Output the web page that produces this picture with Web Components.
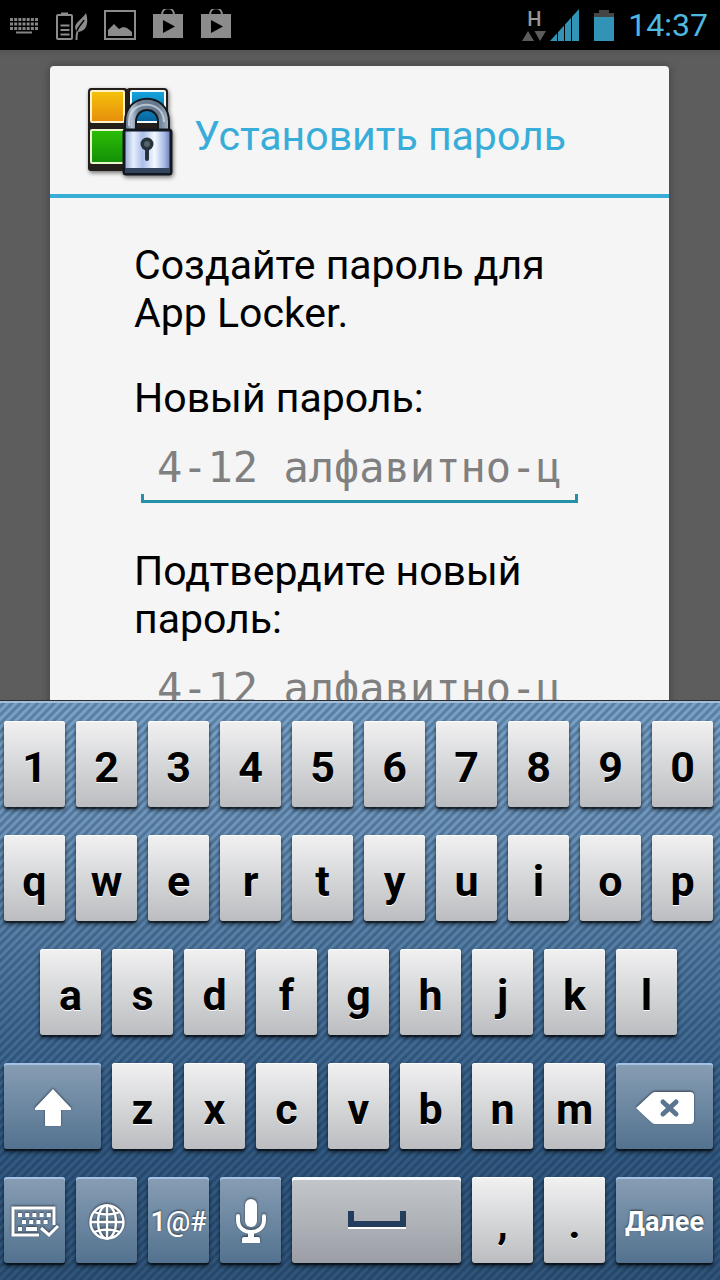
<!DOCTYPE html>
<html lang="ru">
<head>
<meta charset="utf-8">
<meta name="viewport" content="width=device-width, initial-scale=1">
<title>App Locker</title>
<style>
  html, body { margin: 0; height: 100%; }
  body { font-family: Roboto, "Noto Sans", sans-serif; background: #5d5d5d; color: #000; overflow: hidden; }
</style>
</head>
<body>
<phone-screen>
  <status-bar slot="status"></status-bar>
  <app-dialog heading="Установить пароль">
    <app-logo slot="icon"></app-logo>
    <p class="lead">Создайте пароль для App Locker.</p>
    <password-field label="Новый пароль:"></password-field>
    <password-field label="Подтвердите новый пароль:"></password-field>
  </app-dialog>
  <soft-keyboard slot="keyboard"></soft-keyboard>
</phone-screen>

<script>
function define(name, html, setup) {
  const tpl = document.createElement('template');
  tpl.innerHTML = html;
  customElements.define(name, class extends HTMLElement {
    constructor() {
      super();
      this.attachShadow({ mode: 'open' }).append(tpl.content.cloneNode(true));
    }
    connectedCallback() { if (setup) setup(this, this.shadowRoot); }
  });
}

define('phone-screen', `
  <style>
    :host { display: flex; flex-direction: column; height: 100vh; }
    main { flex: 1; min-height: 0; overflow: hidden; padding: 16px 51px 0 50px; background: linear-gradient(#545454, #5d5d5d 8px); }
  </style>
  <slot name="status"></slot>
  <main><slot></slot></main>
  <slot name="keyboard"></slot>`);

define('status-bar', `
  <style>
    :host { display: flex; align-items: center; height: 50px; flex: none; background: #000; padding: 0 12px 0 8px; box-sizing: border-box; justify-content: space-between; }
    div { display: flex; align-items: center; }
    .left { gap: 16px; }
    .right { gap: 14px; }
    svg { display: block; }
    time { font-size: 32px; line-height: 50px; color: #4fb8e0; }
    .net { gap: 4px; }
    .h { display: flex; flex-direction: column; gap: 2px; align-items: center; }
    b { font-size: 20px; line-height: 20px; font-weight: 500; color: #999; }
  </style>
  <div class="left">
    <svg width="32" height="32" viewBox="0 0 32 32" fill="none" stroke="#858585"><path d="M2 10.500h28M2 15h28M2 19.500h28" stroke-width="3" stroke-dasharray="3 1.170"/><path d="M8 23.500h16" stroke-width="2"/></svg>
    <svg width="32" height="32" viewBox="0 0 32 32" fill="none" stroke="#8c8c8c"><rect x="1" y="6" width="15" height="24" rx="1" stroke-width="2"/><path d="M5 5h7" stroke-width="3"/><path d="M4.500 16.500h9M4.500 21h9M4.500 25.500h9" stroke-width="2.200"/><path d="M30 4c3 9 1 19-9 19c-6-8 4-11 9-19z" fill="#8c8c8c" stroke="none"/><path d="M28 11c-2 4-6 6-7 11" stroke="#000" stroke-width="1.500"/><path d="M20.500 31c0-4 0-6 1-8" stroke-width="2"/></svg>
    <svg width="32" height="32" viewBox="0 0 32 32"><rect x="1" y="2" width="30" height="28" fill="none" stroke="#8c8c8c" stroke-width="2"/><path d="M4 27v-6l6-6 5 5 4-2 4 1 5 4v4z" fill="#8c8c8c"/></svg>
    <svg width="32" height="32" viewBox="0 0 32 32"><path d="M10 6C10-3 22-3 22 6" fill="none" stroke="#8c8c8c" stroke-width="2"/><path d="M1 5h30v24H1z" fill="#8c8c8c"/><path d="M11 11v13l12-6.500z" fill="#000"/></svg>
    <svg width="32" height="32" viewBox="0 0 32 32"><path d="M10 6C10-3 22-3 22 6" fill="none" stroke="#8c8c8c" stroke-width="2"/><path d="M1 5h30v24H1z" fill="#8c8c8c"/><path d="M11 11v13l12-6.500z" fill="#000"/></svg>
  </div>
  <div class="right">
    <div class="net">
      <span class="h"><b>H</b><svg width="24" height="10" viewBox="0 0 24 10" fill="#5c5c5c"><path d="M0 10L6 0l6 10zM12.500 0h11.500L18 10z"/></svg></span>
      <svg width="30" height="32" viewBox="0 0 30 32"><path d="M0 32L29 0v32z" fill="#3193b5"/><path d="M7.500 20v12M14.500 12v20M21.500 5v27" stroke="#000" stroke-width="1"/></svg>
    </div>
    <svg width="20" height="32" viewBox="0 0 20 32"><path d="M0 4h5V1h10v3h5v5H0z" fill="#454545"/><path d="M0 8h20v24H0z" fill="#3193b5"/></svg>
    <time>14:37</time>
  </div>`);

define('app-logo', `
  <style>:host { display: block; flex: none; width: 88px; height: 92px; } svg { display: block; filter: drop-shadow(1px 2px 2px #0008); }</style>
  <svg width="88" height="92" viewBox="0 0 88 92">
    <defs>
      <linearGradient id="y" x2="0" y2="1"><stop stop-color="#f5c30a"/><stop offset="1" stop-color="#e78d0c"/></linearGradient>
      <linearGradient id="g" x2="0" y2="1"><stop stop-color="#2dbd05"/><stop offset="1" stop-color="#139008"/></linearGradient>
      <linearGradient id="b" x2="0" y2="1"><stop stop-color="#17a5dc"/><stop offset="1" stop-color="#07649d"/></linearGradient>
      <linearGradient id="s" x2="1" y2="0"><stop stop-color="#4f6279"/><stop offset=".15" stop-color="#b4c3d4"/><stop offset=".3" stop-color="#6f8296"/><stop offset=".75" stop-color="#64778c"/><stop offset="1" stop-color="#a8b7c6"/></linearGradient>
      <linearGradient id="m" x2="1" y2="0"><stop stop-color="#8ca4d0"/><stop offset=".2" stop-color="#e6effc"/><stop offset=".4" stop-color="#a9bee8"/><stop offset=".65" stop-color="#f4f8ff"/><stop offset=".85" stop-color="#a9bce6"/><stop offset="1" stop-color="#6278b5"/></linearGradient>
    </defs>
    <path d="M5 4h34l2 1 2-1h35q4 0 4 4v76q0 3-3 3H5q-3 0-3-3V8q0-4 3-4z" fill="#241e1b"/>
    <rect x="5" y="7" width="33" height="31" rx="1" fill="url(#y)" stroke="#fff1c9" stroke-width="2"/>
    <rect x="45" y="7" width="34" height="31" rx="1" fill="url(#b)" stroke="#f4fbff" stroke-width="2"/>
    <rect x="5" y="46" width="33" height="33" rx="1" fill="url(#g)" stroke="#e9f7cc" stroke-width="2"/>
    <path d="M39 48V38c0-31 44-31 44 0v10H72V38c0-16-22-16-22 0v10z" fill="url(#s)" stroke="#14191f" stroke-width="2"/>
    <path d="M43 42v-4c0-23 35-23 35 0" fill="none" stroke="#dce6ef" stroke-width="2" opacity=".65"/>
    <rect x="38" y="46" width="47" height="44" rx="2" fill="url(#m)" stroke="#131720" stroke-width="3"/>
    <path d="M39 84h45v5H39z" fill="#33445f"/>
    <circle cx="61" cy="60" r="6.500" fill="#28323b"/><path d="M61 63v12" stroke="#28323b" stroke-width="4" stroke-linecap="round"/><circle cx="61" cy="60" r="3" fill="#53636b"/>
  </svg>`);

define('app-dialog', `
  <style>
    :host { display: block; background: #f5f5f5; border-radius: 4px 4px 0 0; box-shadow: 0 0 8px #0005; }
    header { display: flex; align-items: center; gap: 20px; height: 128px; padding: 0 36px; border-bottom: 4px solid #38add5; }
    h1 { margin: 0; padding-top: 12px; font-size: 41px; line-height: 48px; font-weight: 400; color: #38add9; white-space: nowrap; }
    section { padding: 43px 85px 44px 84px; display: flex; flex-direction: column; gap: 37px; font-size: 41px; line-height: 48px; }
    ::slotted(p) { margin: 0; }
    ::slotted(password-field:last-child) { margin-top: 7px; }
  </style>
  <header><slot name="icon"></slot><h1></h1></header>
  <section><slot></slot></section>`,
  (el, root) => { root.querySelector('h1').textContent = el.getAttribute('heading'); });

define('password-field', `
  <style>
    :host { display: block; }
    label { display: block; }
    input {
      display: block; box-sizing: border-box; width: calc(100% - 13px); height: 60px; margin: 21px 6px 0 7px; padding: 0 16px 12px; border: 0; border-radius: 0; outline: 0;
      font: 42px/48px "DejaVu Sans Mono", monospace; color: #000;
      background:
        linear-gradient(#2590aa, #2590aa) left bottom / 3px 9px no-repeat,
        linear-gradient(#2590aa, #2590aa) right bottom / 3px 9px no-repeat,
        linear-gradient(#2590aa, #2590aa) left bottom / 100% 3px no-repeat;
    }
    input::placeholder { color: #808080; opacity: 1; }
  </style>
  <label for="pw"></label>
  <input id="pw" type="text" placeholder="4-12 алфавитно-ц">`,
  (el, root) => { root.querySelector('label').textContent = el.getAttribute('label'); });

define('key-cap', `
  <style>
    :host { display: block; grid-column: span 2; margin: 0 7px 0 4px; }
    button {
      display: flex; align-items: center; justify-content: center; box-sizing: border-box; width: 100%; height: 86px; margin: 0; padding: 6px 0 0; border: 0; border-radius: 3px;
      font: 700 43px/50px Roboto, sans-serif; color: #000; text-shadow: 0 1px 0 #fff;
      background: linear-gradient(#f1f1f2, #bbbdc0);
      box-shadow: 0 3px 4px #0009, 0 2px 1px #0007, inset 0 1px 0 #fff;
    }
    :host([tone="blue"]) button {
      padding: 4px 0 0; font-size: 27px; color: #fff; text-shadow: 0 -1px 2px #0009;
      background: linear-gradient(#879db4, #53728f);
      box-shadow: 0 3px 4px #0009, 0 2px 1px #0007, inset 0 2px 0 #a5c2e6;
    }
    :host([tone="grey"]) button { padding: 0; background: linear-gradient(#c4c7ca, #9b9ea5); box-shadow: 0 3px 4px #0009, 0 2px 1px #0007, inset 0 3px 0 #f4f9fd; }
    :host([thin]) button { font-weight: 500; }
    :host([wide="3"]) { grid-column: span 3; }
    :host([wide="5"]) { grid-column: span 5; }
    ::slotted(svg) { display: block; filter: drop-shadow(0 -1px 1px #0008); }
  </style>
  <button type="button"><slot></slot></button>`,
  (el, root) => { const n = el.getAttribute('name'); if (n) root.querySelector('button').setAttribute('aria-label', n); });

const keys = s => [...s].map(c => `<key-cap>${c}</key-cap>`).join('');
define('soft-keyboard', `
  <style>
    :host {
      display: grid; flex: none; gap: 28px; padding: 20px 0 17px; border-top: 1px solid #252c38; box-shadow: inset 0 2px 0 #a4bed6;
      background:
        repeating-linear-gradient(135deg, #001c3a00 0 2px, #001c3a40 3px 5px, #001c3a00 6px),
        linear-gradient(#7aa2c8, #6f96bb 20%, #456e96 55%, #335a82 75%, #315579);
    }
    .row { display: grid; grid-template-columns: repeat(20, minmax(0, 1fr)); }
    .home key-cap:first-child { grid-column: 2 / span 2; }
  </style>
  <div class="row">${keys('1234567890')}</div>
  <div class="row">${keys('qwertyuiop')}</div>
  <div class="row home">${keys('asdfghjkl')}</div>
  <div class="row">
    <key-cap tone="blue" wide="3" name="Shift"><svg width="38" height="38" viewBox="0 0 38 38"><path d="M19 0L37 19v2H27v15q0 1-1 1H12q-1 0-1-1V21H1v-2z" fill="#fff"/></svg></key-cap>
    ${keys('zxcvbnm')}
    <key-cap tone="blue" wide="3" name="Backspace"><svg width="58" height="32" viewBox="0 0 58 32"><path d="M0 16L15 2q2-2 4-2h35q4 0 4 4v24q0 4-4 4H19q-2 0-4-2z" fill="#fff"/><path d="M27 10l13 12M40 10L27 22" stroke="#5b7690" stroke-width="5" stroke-linecap="round"/></svg></key-cap>
  </div>
  <div class="row">
    <key-cap tone="blue" name="Hide keyboard"><svg width="48" height="32" viewBox="0 0 48 32" fill="none" stroke="#fff" stroke-width="3"><path d="M43 19V2H2v27h26"/><path d="M30 22l8 7 9-9"/><path d="M7 9h35" stroke-width="4" stroke-dasharray="4 3.200"/><path d="M11 16h27" stroke-width="4" stroke-dasharray="4 3.200"/><path d="M7 23h4M15 23h11" stroke-width="4"/></svg></key-cap>
    <key-cap tone="blue" name="Language"><svg width="38" height="38" viewBox="0 0 38 38" fill="none" stroke="#fff" stroke-width="2.400"><circle cx="19" cy="19" r="16.500"/><ellipse cx="19" cy="19" rx="9" ry="16.500"/><path d="M19 2v34M2 19h34M6 9q13 5 26 0M6 29q13-5 26 0"/></svg></key-cap>
    <key-cap tone="blue" thin>1@#</key-cap>
    <key-cap tone="blue" name="Voice input"><svg width="32" height="46" viewBox="0 0 32 46"><rect x="10" y="0" width="12" height="28" rx="6" fill="#fff"/><path d="M3 17v4c0 16 26 16 26 0v-4" fill="none" stroke="#fff" stroke-width="4" stroke-linecap="round"/><path d="M13 32h6v6h4q2 0 2 2v4H7v-4q0-2 2-2h4z" fill="#fff"/></svg></key-cap>
    <key-cap tone="grey" wide="5" name="Space"><svg style="filter:none" width="58" height="18" viewBox="0 0 58 18"><path d="M0 16h58v2H0z" fill="#fff"/><path d="M0 0h6v10h46V0h6v16H0z" fill="#223e5c"/></svg></key-cap>
    <key-cap>,</key-cap>
    <key-cap>.</key-cap>
    <key-cap tone="blue" wide="3">Далее</key-cap>
  </div>`);
</script>
</body>
</html>
